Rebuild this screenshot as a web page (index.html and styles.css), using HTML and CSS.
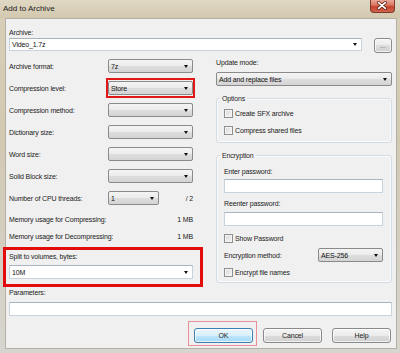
FILE: index.html
```html
<!DOCTYPE html>
<html lang="en">
<head>
  <meta charset="UTF-8" />
  <title>Add to Archive</title>
  <link rel="stylesheet" href="styles.css">
</head>
<body>
  <div class="window">
    <div class="titlebar">
      <span class="title">Add to Archive</span>
      <span class="close">
        <svg width="25" height="13" viewBox="0 0 25 13">
          <path d="M9 3.5 L16 9.5 M16 3.5 L9 9.5" stroke="#5a1a10" stroke-width="3.4" stroke-linecap="round"/>
          <path d="M9 3.5 L16 9.5 M16 3.5 L9 9.5" stroke="#ffffff" stroke-width="1.8" stroke-linecap="round"/>
        </svg>
      </span>
    </div>

    <div class="frame">
      <div class="client">
        <div class="label top-label">Archive:</div>
        <div class="archive-row">
          <div class="combo archive-combo"><span>Video_1.7z</span><span class="arrow"></span></div>
          <button class="btn dots">...</button>
        </div>

        <div class="columns">
          <div class="left">
            <div class="field first">
              <span class="name">Archive format:</span>
              <div class="select"><span>7z</span><span class="arrow"></span></div>
            </div>
            <div class="field">
              <span class="name">Compression level:</span>
              <div class="select marked"><span>Store</span><span class="arrow"></span></div>
            </div>
            <div class="field">
              <span class="name">Compression method:</span>
              <div class="select"><span></span><span class="arrow"></span></div>
            </div>
            <div class="field">
              <span class="name">Dictionary size:</span>
              <div class="select"><span></span><span class="arrow"></span></div>
            </div>
            <div class="field">
              <span class="name">Word size:</span>
              <div class="select"><span></span><span class="arrow"></span></div>
            </div>
            <div class="field">
              <span class="name">Solid Block size:</span>
              <div class="select"><span></span><span class="arrow"></span></div>
            </div>
            <div class="field">
              <span class="name">Number of CPU threads:</span>
              <div class="select small"><span>1</span><span class="arrow"></span></div>
              <span class="ratio">/ 2</span>
            </div>

            <div class="memory first-mem">
              <span>Memory usage for Compressing:</span>
              <span>1 MB</span>
            </div>
            <div class="memory">
              <span>Memory usage for Decompressing:</span>
              <span>1 MB</span>
            </div>

            <div class="split">
              <div class="label">Split to volumes, bytes:</div>
              <div class="combo split-combo"><span>10M</span><span class="arrow"></span></div>
            </div>
          </div>

          <div class="right">
            <div class="label update-label">Update mode:</div>
            <div class="select wide"><span>Add and replace files</span><span class="arrow"></span></div>

            <fieldset class="group options">
              <legend>Options</legend>
              <div class="check first-check"><span class="box"></span>Create SFX archive</div>
              <div class="check"><span class="box"></span>Compress shared files</div>
            </fieldset>

            <fieldset class="group encryption">
              <legend>Encryption</legend>
              <div class="label pass-label">Enter password:</div>
              <div class="input pass-input"></div>
              <div class="label pass-label2">Reenter password:</div>
              <div class="input pass-input2"></div>
              <div class="check show-check"><span class="box"></span>Show Password</div>
              <div class="enc-row">
                <span>Encryption method:</span>
                <div class="select enc"><span>AES-256</span><span class="arrow"></span></div>
              </div>
              <div class="check names-check"><span class="box"></span>Encrypt file names</div>
            </fieldset>
          </div>
        </div>

        <div class="label params-label">Parameters:</div>
        <div class="input params"></div>

        <div class="buttons">
          <button class="btn ok">OK</button>
          <button class="btn">Cancel</button>
          <button class="btn">Help</button>
        </div>
      </div>
    </div>
  </div>
</body>
</html>
```

FILE: styles.css
```css
* {
  margin: 0;
  padding: 0;
  box-sizing: border-box;
}

body {
  width: 400px;
  height: 353px;
  overflow: hidden;
  font-family: 'Liberation Sans', Arial, sans-serif;
  font-size: 7px;
  color: #222;
  letter-spacing: -0.15px;
}

.window {
  height: 353px;
  display: flex;
  flex-direction: column;
  background: linear-gradient(#d8cfb9, #d2c9b3 40%, #d6d5cf);
}

/* title bar */

.titlebar {
  height: 18px;
  flex: none;
  display: flex;
  justify-content: space-between;
  align-items: flex-start;
  padding-left: 3px;
  background: linear-gradient(#e0d8c4, #d2c8ae);
}

.title {
  font-size: 8px;
  line-height: 17px;
  color: #1a1a1a;
  letter-spacing: 0;
}

.close {
  width: 25px;
  height: 13px;
  margin-right: 5px;
  border: 1px solid #7d3a30;
  border-top: none;
  border-radius: 0 0 4px 4px;
  background: linear-gradient(#eaa898, #d8715d 45%, #c8432e 55%, #d0644c);
  display: flex;
}

.close svg {
  margin: -1px 0 0 -1px;
}

/* frame + client */

.frame {
  flex: 1;
  display: flex;
  padding: 0 3px 4px 5px;
}

.client {
  flex: 1;
  background: #f0f0f0;
  border: 1px solid #b5b0a3;
  padding: 9px 4px 0 3px;
}

.label {
  line-height: 10px;
  height: 10px;
}

.top-label {
  line-height: 9px;
  height: 9px;
}

.archive-row {
  margin-top: 1px;
  height: 15px;
  display: flex;
  justify-content: space-between;
}

/* controls */

.combo,
.input {
  height: 14px;
  background: #fff;
  border: 1px solid #c9d3dd;
  border-top-color: #a9b4c0;
}

.combo {
  display: flex;
  align-items: center;
  padding: 0 4px 0 2px;
  color: #111;
}

.archive-combo {
  width: 353px;
  height: 13px;
}

.select {
  width: 85px;
  height: 14px;
  display: flex;
  align-items: center;
  padding: 0 4px 0 2px;
  border: 1px solid #8a8a8a;
  border-radius: 2px;
  background: linear-gradient(#f4f4f4, #ebebeb 50%, #dedede 50%, #d4d4d4);
  color: #111;
}

.arrow {
  margin-left: auto;
  width: 0;
  height: 0;
  border-left: 2.5px solid transparent;
  border-right: 2.5px solid transparent;
  border-top: 3px solid #111;
}

.btn {
  font-family: inherit;
  font-size: 7px;
  letter-spacing: -0.15px;
  color: #222;
  height: 15px;
  width: 59px;
  border: 1px solid #8a8a8a;
  border-radius: 3px;
  background: linear-gradient(#f4f4f4, #ebebeb 50%, #dddddd 50%, #d0d0d0);
  box-shadow: inset 0 0 0 1px rgba(255, 255, 255, 0.7);
}

.dots {
  width: 18px;
  color: #666;
}

/* left column */

.columns {
  display: grid;
  grid-template-columns: 184px 176px;
  column-gap: 23px;
  align-items: start;
}

.field {
  display: flex;
  align-items: center;
  height: 14px;
  margin-top: 8px;
}

.field.first {
  margin-top: 6px;
}

.name {
  width: 99px;
  flex: none;
}

.select.marked {
  position: relative;
}

.select.marked::after {
  content: "";
  position: absolute;
  top: -4px;
  bottom: -4px;
  left: -3px;
  right: -3px;
  border: 2px solid #e01818;
  pointer-events: none;
}

.select.small {
  width: 51px;
}

.ratio {
  margin-left: auto;
}

.memory {
  display: flex;
  justify-content: space-between;
  line-height: 10px;
  height: 10px;
  margin-top: 7px;
}

.memory.first-mem {
  margin-top: 10px;
}

.split {
  position: relative;
  margin-top: 10px;
}

.split::before {
  content: "";
  position: absolute;
  top: -5px;
  bottom: -8px;
  left: -6px;
  right: -10px;
  border: 3px solid #e30c0c;
  pointer-events: none;
}

.split-combo {
  margin-top: 3px;
}

/* right column */

.update-label {
  margin-top: 5px;
}

.select.wide {
  width: 176px;
  margin-top: 4px;
}

.group {
  border: 1px solid #d3dce3;
  border-radius: 3px;
  padding: 0 8px 7px 7px;
  box-shadow: inset 0 0 0 1px #fbfbfb;
}

.group legend {
  line-height: 9px;
  padding: 0 2px;
  margin-left: -4px;
}

.options {
  margin-top: 8px;
}

.encryption {
  margin-top: 8px;
  padding-bottom: 5px;
}

.check {
  display: flex;
  align-items: center;
  height: 10px;
  margin-top: 7px;
}

.check.first-check {
  margin-top: 5px;
}

.box {
  width: 9px;
  height: 9px;
  margin-right: 2px;
  border: 1px solid #8e8f8f;
  background: linear-gradient(135deg, #d8d8d8, #f6f6f6);
  box-shadow: inset 0 0 0 1px #f4f4f4;
}

.pass-label {
  margin-top: 7px;
}

.pass-input {
  margin-top: 2px;
}

.pass-label2 {
  margin-top: 6px;
}

.pass-input2 {
  margin-top: 3px;
}

.show-check {
  margin-top: 7px;
}

.enc-row {
  display: flex;
  justify-content: space-between;
  align-items: center;
  height: 14px;
  margin-top: 5px;
}

.select.enc {
  width: 65px;
}

.check.names-check {
  margin-top: 5px;
}

/* bottom */

.params-label {
  margin-top: 5px;
}

.params {
  margin-top: 4px;
}

.buttons {
  display: flex;
  justify-content: flex-end;
  gap: 10px;
  margin-top: 12px;
  padding-right: 1px;
}

.btn.ok {
  position: relative;
  border-color: #3c7fb1;
  background: linear-gradient(#eaf6fd, #d9f0fc 50%, #bee6fd 50%, #a7d9f5);
}

.btn.ok::before {
  content: "";
  position: absolute;
  top: -8px;
  bottom: -4px;
  left: -7px;
  right: -5px;
  border: 1px solid #eb8f96;
  pointer-events: none;
}
```
